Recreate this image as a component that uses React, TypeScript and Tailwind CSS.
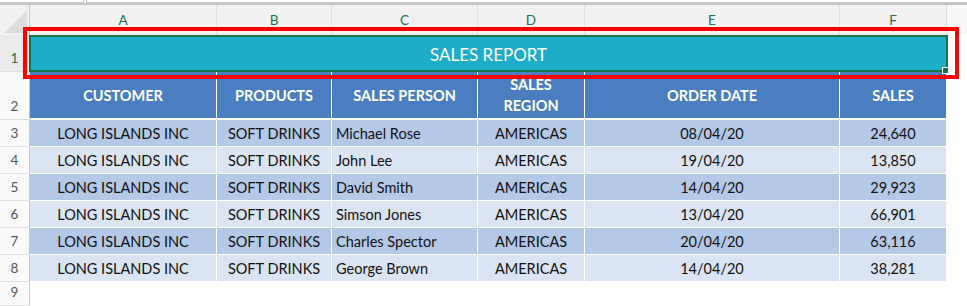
import React from "react";

const COLS = [
  { key: "A", w: "w-[187px]" },
  { key: "B", w: "w-[115px]" },
  { key: "C", w: "w-[146px]" },
  { key: "D", w: "w-[107px]" },
  { key: "E", w: "w-[255px]" },
  { key: "F", w: "w-[107px]" },
];

const DATA = [
  ["LONG ISLANDS INC", "SOFT DRINKS", "Michael Rose", "AMERICAS", "08/04/20", "24,640"],
  ["LONG ISLANDS INC", "SOFT DRINKS", "John Lee", "AMERICAS", "19/04/20", "13,850"],
  ["LONG ISLANDS INC", "SOFT DRINKS", "David Smith", "AMERICAS", "14/04/20", "29,923"],
  ["LONG ISLANDS INC", "SOFT DRINKS", "Simson Jones", "AMERICAS", "13/04/20", "66,901"],
  ["LONG ISLANDS INC", "SOFT DRINKS", "Charles Spector", "AMERICAS", "20/04/20", "63,116"],
  ["LONG ISLANDS INC", "SOFT DRINKS", "George Brown", "AMERICAS", "14/04/20", "38,281"],
];

const font = { fontFamily: "Lato, 'Open Sans', sans-serif" };

function RowHead({ n, selected, h }: { n: number; selected?: boolean; h: string }) {
  return (
    <div
      className={`${h} w-[30px] shrink-0 flex items-end justify-center pb-[3px] border-r border-b border-r-[#c8c8c8] border-b-[#e0e0e0] text-[13.5px] ${
        selected ? "bg-[#ebebeb] text-[#217346]" : "bg-[#fafafa] text-[#555555]"
      }`}
    >
      {n}
    </div>
  );
}

export default function App() {
  return (
    <div className="relative w-[967px] h-[306px] bg-white overflow-hidden text-[#111111]" style={font}>
      {/* top strip */}
      <div className="h-[3px] flex">
        <div className="w-[84px] h-[3px] border-r border-b border-[#c8c8c8]" />
        <div className="w-[2px]" />
        <div className="flex-1 h-[3px] border-l border-b border-[#c8c8c8]" />
      </div>
      <div className="h-[2px] bg-[#c4c4c4]" />

      {/* column header */}
      <div className="flex h-[30px]">
        <div className="relative w-[30px] shrink-0 bg-[#f1f1f1] border-r border-[#c8c8c8] overflow-hidden">
          <svg width="30" height="30" className="absolute left-0 top-0">
            <polygon points="4,28 27,5 27,28" fill="#dcdcdc" />
          </svg>
        </div>
        {COLS.map((c) => (
          <div
            key={c.key}
            className={`${c.w} shrink-0 bg-[#f1f1f1] border-r border-[#dedede] flex items-end justify-center pb-[5px] text-[13.5px] text-[#217346]`}
          >
            {c.key}
          </div>
        ))}
        <div className="flex-1 bg-[#f8f8f8]" />
      </div>

      {/* row 1 */}
      <div className="flex">
        <RowHead n={1} selected h="h-[37px]" />
        <div className="w-[917px] h-[37px] shrink-0 bg-[#1eadc8] border border-white flex items-center justify-center text-white text-[17px] pt-[2px]">
          SALES REPORT
        </div>
      </div>

      {/* row 2 header */}
      <div className="flex">
        <RowHead n={2} h="h-[48px]" />
        {["CUSTOMER", "PRODUCTS", "SALES PERSON", "SALES\nREGION", "ORDER DATE", "SALES"].map((t, i) => (
          <div
            key={i}
            className={`${COLS[i].w} h-[48px] shrink-0 bg-[#4a7ec0] border-r border-b-2 border-white flex items-center justify-center text-center text-white font-bold text-[14.5px] leading-[21px] whitespace-pre-line`}
          >
            {t}
          </div>
        ))}
      </div>

      {/* data rows */}
      {DATA.map((row, r) => (
        <div key={r} className="flex">
          <RowHead n={r + 3} h="h-[27px]" />
          {row.map((v, i) => (
            <div
              key={i}
              className={`${COLS[i].w} h-[27px] shrink-0 border-r border-b border-white flex items-center text-[14.5px] pt-[1px] ${
                r % 2 === 0 ? "bg-[#b4c8e8]" : "bg-[#dbe4f2]"
              } ${i === 2 ? "justify-start pl-[4px]" : "justify-center"}`}
            >
              {v}
            </div>
          ))}
        </div>
      ))}

      {/* row 9 */}
      <div className="flex">
        <RowHead n={9} h="h-[24px]" />
      </div>

      {/* selection overlay */}
      <div className="absolute left-[29px] top-[35px] w-[919px] h-[37px] border-2 border-[#1a7343] pointer-events-none" />
      <div className="absolute left-[942px] top-[67px] w-[7px] h-[7px] bg-[#1a7343] border border-white" />

      {/* red highlight box */}
      <div className="absolute left-[23px] top-[27px] w-[936px] h-[52px] border-4 border-[#ff0000] pointer-events-none" />
    </div>
  );
}
